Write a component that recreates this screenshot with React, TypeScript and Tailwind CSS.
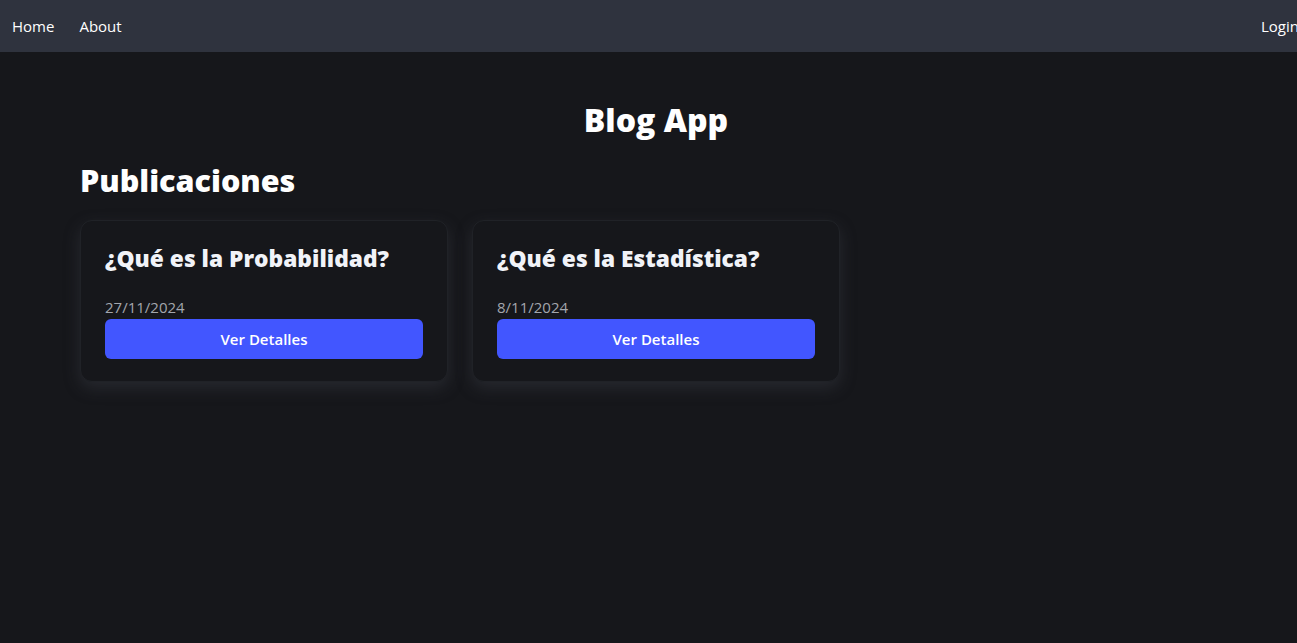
import React from "react";

const posts = [
  { title: "¿Qué es la Probabilidad?", date: "27/11/2024" },
  { title: "¿Qué es la Estadística?", date: "8/11/2024" },
];

export default function App() {
  return (
    <div
      className="min-h-[643px] w-full overflow-hidden bg-[#16171b] text-white"
      style={{ fontFamily: '"Open Sans", "Noto Sans", sans-serif' }}
    >
      <nav className="flex h-[52px] items-center justify-between bg-[#2f333e] pl-3 text-[15px]">
        <div className="flex items-center gap-[25px]">
          <span>Home</span>
          <span>About</span>
        </div>
        <span className="-mr-[2px]">Login</span>
      </nav>
      <main className="ml-20 w-[1152px] pt-[50px]">
        <h1 className="text-center text-[32px] font-extrabold leading-9">Blog App</h1>
        <h2 className="mt-6 text-[30.5px] font-extrabold leading-9">Publicaciones</h2>
        <div className="mt-[22px] flex gap-6">
          {posts.map((p) => (
            <div
              key={p.title}
              className="flex h-[162px] w-[368px] flex-col rounded-xl border border-[#202227] bg-[#16171b] px-6 pt-[22px] shadow-[0_6px_16px_rgba(60,62,70,0.45)]"
            >
              <h3 className="text-[22.75px] font-extrabold leading-8 text-[#f1f3f8]">{p.title}</h3>
              <p className="mt-[22px] text-[15px] leading-5 text-[#a3a6ad]">{p.date}</p>
              <button className="mt-[2px] h-10 w-full rounded-md bg-[#4256ff] text-[15px] font-semibold text-white">
                Ver Detalles
              </button>
            </div>
          ))}
        </div>
      </main>
    </div>
  );
}
